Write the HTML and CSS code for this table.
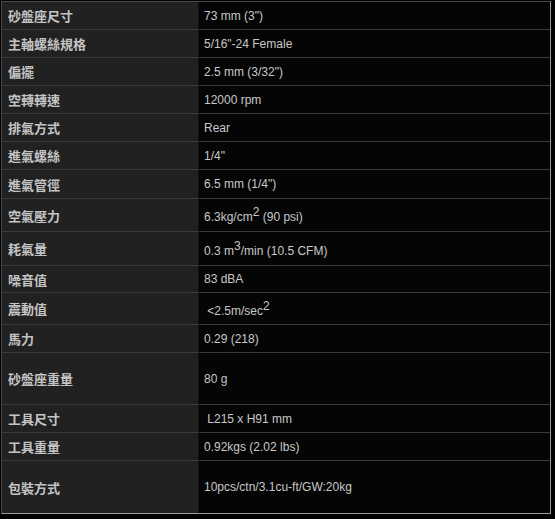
FILE: index.html
```html
<!DOCTYPE html>
<html lang="zh-Hant">
<head>
<meta charset="utf-8">
<title>規格</title>
<link rel="stylesheet" href="styles.css">
</head>
<body>
<table class="spec">
  <tbody>
    <tr class="h27"><th>砂盤座尺寸</th><td>73 mm (3")</td></tr>
    <tr class="h27"><th>主軸螺絲規格</th><td>5/16"-24 Female</td></tr>
    <tr class="h27"><th>偏擺</th><td>2.5 mm (3/32")</td></tr>
    <tr class="h27"><th>空轉轉速</th><td>12000 rpm</td></tr>
    <tr class="h27"><th>排氣方式</th><td>Rear</td></tr>
    <tr class="h27"><th>進氣螺絲</th><td>1/4"</td></tr>
    <tr class="h28"><th>進氣管徑</th><td>6.5 mm (1/4")</td></tr>
    <tr class="h32"><th>空氣壓力</th><td>6.3kg/cm<sup>2</sup> (90 psi)</td></tr>
    <tr class="h33"><th>耗氣量</th><td>0.3 m<sup>3</sup>/min (10.5 CFM)</td></tr>
    <tr class="h26"><th>噪音值</th><td>83 dBA</td></tr>
    <tr class="h31"><th>震動值</th><td>&nbsp;&lt;2.5m/sec<sup>2</sup></td></tr>
    <tr class="h27"><th>馬力</th><td>0.29 (218)</td></tr>
    <tr class="h51"><th>砂盤座重量</th><td>80 g</td></tr>
    <tr class="h27"><th>工具尺寸</th><td>&nbsp;L215 x H91 mm</td></tr>
    <tr class="h27"><th>工具重量</th><td>0.92kgs (2.02 lbs)</td></tr>
    <tr class="h52 last"><th>包裝方式</th><td>10pcs/ctn/3.1cu-ft/GW:20kg</td></tr>
  </tbody>
</table>
</body>
</html>
```
FILE: styles.css
```css
html, body {
  margin: 0;
  padding: 0;
  background: #000;
}
body {
  padding: 1px 0 0 1px;
}
.spec {
  border-collapse: separate;
  border-spacing: 0;
  width: 550px;
  border: 1px solid;
  border-color: #4a4a4a #9a9a9a #9a9a9a #4a4a4a;
  font-family: "Liberation Sans", Arial, "Noto Sans CJK TC", sans-serif;
  color: #c8c8c8;
}
.spec th,
.spec td {
  padding: 0;
  vertical-align: middle;
  border-bottom: 1px solid #3a3a3a;
  box-sizing: content-box;
}
.spec .last th,
.spec .last td {
  border-bottom: 0;
}
.spec th {
  width: 190px;
  padding-left: 6px;
  text-align: left;
  background: #212121;
  font-family: "Noto Sans CJK TC", sans-serif;
  font-weight: 700;
  font-size: 13px;
  color: #c4c4c4;
  border-right: 1px solid #111;
}
.spec td {
  padding-left: 5px;
  background: #050505;
  font-size: 12px;
}
.spec sup {
  font-size: 12px;
  line-height: 1;
  vertical-align: 5px;
}
.h26 th, .h26 td { height: 26px; }
.h27 th, .h27 td { height: 27px; }
.h28 th, .h28 td { height: 28px; }
.h31 th, .h31 td { height: 31px; }
.h32 th, .h32 td { height: 32px; }
.h33 th, .h33 td { height: 33px; }
.h51 th, .h51 td { height: 51px; }
.h52 th, .h52 td { height: 52px; }
```
